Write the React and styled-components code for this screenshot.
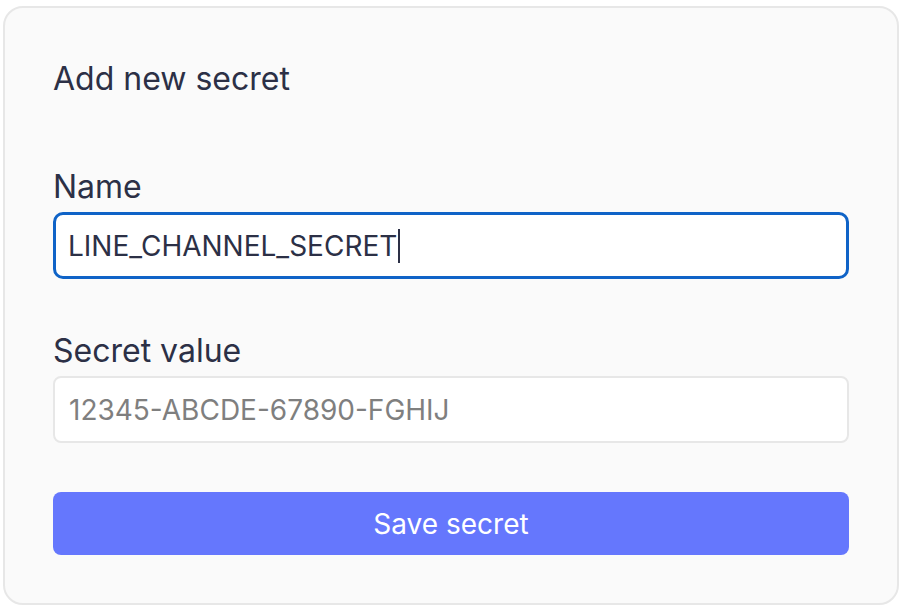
import React, { useState } from 'react';
import styled, { createGlobalStyle } from 'styled-components';

const GlobalStyle = createGlobalStyle`
  html, body {
    margin: 0;
    padding: 0;
    background: #ffffff;
    font-family: Inter, "Noto Sans", sans-serif;
  }
`;

const Page = styled.div`
  padding: 6px 3px 4px 3px;
`;

const Card = styled.form`
  background-color: #fafafa;
  border: 2px solid #e7e7e7;
  border-radius: 20px;
  padding: 50px 48px 48px 48px;
  display: flex;
  flex-direction: column;
`;

const Title = styled.h2`
  margin: 0 0 66px 0;
  font-size: 32px;
  font-weight: 400;
  line-height: 42px;
  color: #2c3046;
`;

const Field = styled.div`
  display: flex;
  flex-direction: column;
  gap: 4px;
  margin-bottom: ${props => props.last ? '49px' : '51px'};
`;

const Label = styled.label`
  font-size: 32px;
  line-height: 42px;
  color: #2c3046;
`;

const Input = styled.input`
  box-sizing: border-box;
  width: 100%;
  height: 67px;
  padding: 0 14px;
  font-family: Inter, "Noto Sans", sans-serif;
  font-size: 28px;
  color: #2c3046;
  background: #ffffff;
  border: 2px solid #e7e7e7;
  border-radius: 8px;
  outline: none;
  &::placeholder {
    color: #7f7f7f;
  }
`;

const FocusedInput = styled.div`
  box-sizing: border-box;
  width: 100%;
  height: 67px;
  padding: 0 12px;
  display: flex;
  align-items: center;
  font-size: 28px;
  color: #2c3046;
  background: #ffffff;
  border: 3px solid #0f63c7;
  border-radius: 10px;
`;

const Caret = styled.span`
  display: inline-block;
  width: 2px;
  height: 34px;
  margin-left: 1px;
  background: #2c3046;
`;

const SaveButton = styled.button`
  height: 63px;
  border: none;
  border-radius: 8px;
  background-color: #6577fd;
  color: #ffffff;
  font-family: Inter, "Noto Sans", sans-serif;
  font-size: 28px;
  cursor: pointer;
`;

function App() {
  const [value, setValue] = useState('');

  return (
    <Page>
      <GlobalStyle />
      <Card onSubmit={e => e.preventDefault()}>
        <Title>Add new secret</Title>
        <Field>
          <Label>Name</Label>
          <FocusedInput>
            LINE_CHANNEL_SECRET<Caret />
          </FocusedInput>
        </Field>
        <Field last>
          <Label>Secret value</Label>
          <Input
            placeholder="12345-ABCDE-67890-FGHIJ"
            value={value}
            onChange={e => setValue(e.target.value)}
          />
        </Field>
        <SaveButton type="submit">Save secret</SaveButton>
      </Card>
    </Page>
  );
}

export default App;
